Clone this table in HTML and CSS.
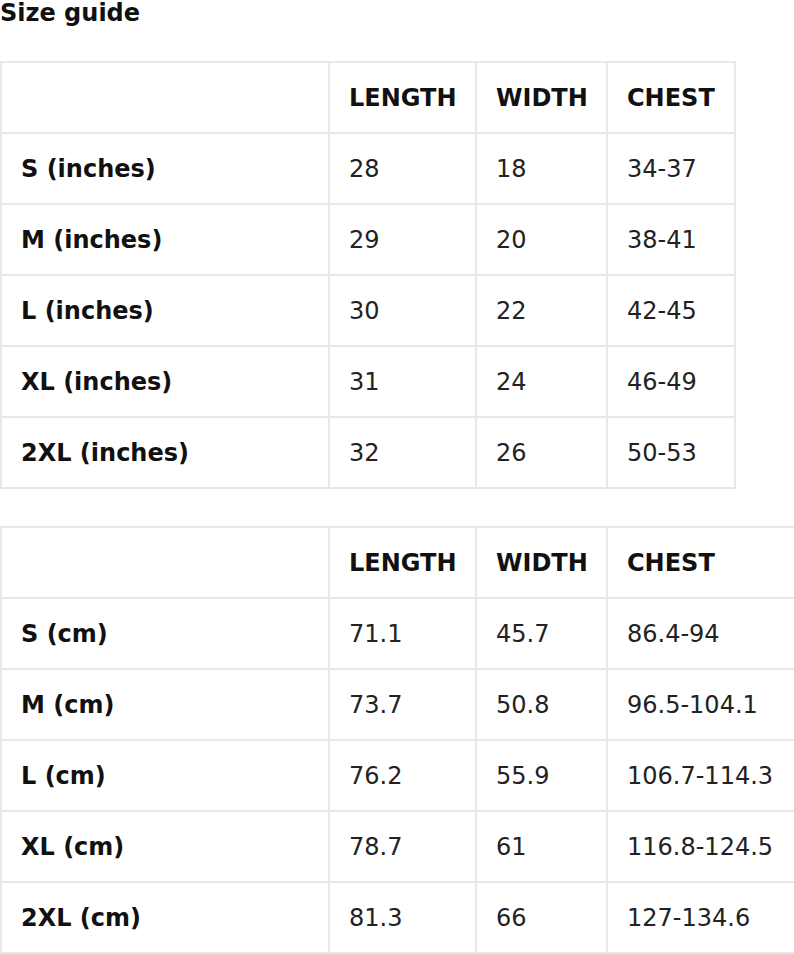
FILE: index.html
```html
<!DOCTYPE html>
<html>
<head>
<meta charset="utf-8">
<link rel="stylesheet" href="styles.css">
</head>
<body>
<h1 class="title">Size guide</h1>
<table class="sizes sizes-in">
  <colgroup><col class="c1"><col class="c2"><col class="c3"><col class="c4a"></colgroup>
  <tr><th></th><th>LENGTH</th><th>WIDTH</th><th>CHEST</th></tr>
  <tr><th>S (inches)</th><td>28</td><td>18</td><td>34-37</td></tr>
  <tr><th>M (inches)</th><td>29</td><td>20</td><td>38-41</td></tr>
  <tr><th>L (inches)</th><td>30</td><td>22</td><td>42-45</td></tr>
  <tr><th>XL (inches)</th><td>31</td><td>24</td><td>46-49</td></tr>
  <tr><th>2XL (inches)</th><td>32</td><td>26</td><td>50-53</td></tr>
</table>
<table class="sizes sizes-cm">
  <colgroup><col class="c1"><col class="c2"><col class="c3"><col class="c4b"></colgroup>
  <tr><th></th><th>LENGTH</th><th>WIDTH</th><th>CHEST</th></tr>
  <tr><th>S (cm)</th><td>71.1</td><td>45.7</td><td>86.4-94</td></tr>
  <tr><th>M (cm)</th><td>73.7</td><td>50.8</td><td>96.5-104.1</td></tr>
  <tr><th>L (cm)</th><td>76.2</td><td>55.9</td><td>106.7-114.3</td></tr>
  <tr><th>XL (cm)</th><td>78.7</td><td>61</td><td>116.8-124.5</td></tr>
  <tr><th>2XL (cm)</th><td>81.3</td><td>66</td><td>127-134.6</td></tr>
</table>
</body>
</html>
```
FILE: styles.css
```css
html, body {
  margin: 0;
  padding: 0;
  background: #ffffff;
}
body {
  font-family: "DejaVu Sans", Verdana, sans-serif;
  color: #111111;
  font-size: 24px;
}
.title {
  margin: 0;
  font-size: 24px;
  font-weight: bold;
  line-height: 26px;
  height: 61px;
  color: #111111;
}
.sizes {
  border-collapse: collapse;
  table-layout: fixed;
  margin: 0;
}
.sizes-in {
  width: 734px;
  margin-bottom: 37px;
}
.sizes-cm {
  width: 794px;
}
.c1 { width: 328px; }
.c2 { width: 147px; }
.c3 { width: 131px; }
.c4a { width: 128px; }
.c4b { width: 188px; }
.sizes th, .sizes td {
  border: 2px solid #e8e8e8;
  height: 69px;
  padding: 0 0 0 19px;
  text-align: left;
  vertical-align: middle;
  white-space: nowrap;
  line-height: 28px;
}
.sizes th {
  font-weight: bold;
  color: #111111;
}
.sizes td {
  font-weight: normal;
  color: #222222;
}
```
